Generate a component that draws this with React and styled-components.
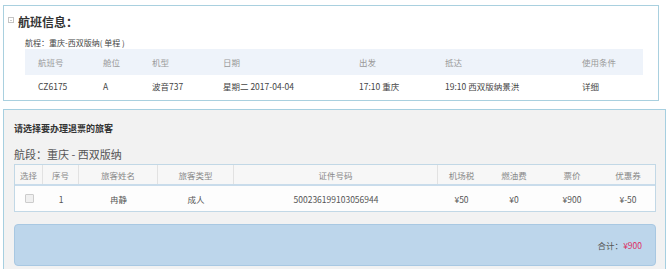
import styled, { createGlobalStyle } from "styled-components";

const Global = createGlobalStyle`
  body {
    margin: 0;
    background: #fff;
    font-family: "Noto Sans CJK SC", "Noto Sans", sans-serif;
    color: #333;
  }
`;

const Page = styled.div`
  width: 671px;
  height: 269px;
  overflow: hidden;
  padding: 5px 0 0 3px;
  box-sizing: border-box;
`;

const FlightPanel = styled.div`
  width: 656px;
  height: 96px;
  box-sizing: border-box;
  border: 1px solid #a9d0df;
  padding: 8px 15px 0 4px;
`;

const PanelTitle = styled.div`
  display: flex;
  align-items: center;
  gap: 4px;
  font-size: 12px;
  font-weight: bold;
  color: #333;
  line-height: 16px;
`;

const Toggle = styled.span`
  position: relative;
  width: 4px;
  height: 4px;
  border: 1px solid #c4c4c4;
  margin-top: -4px;

  &::after {
    content: "";
    position: absolute;
    left: 1px;
    right: 1px;
    top: 2px;
    height: 1px;
    background: #ccc;
  }
`;

const RouteLine = styled.div`
  font-size: 8px;
  color: #444;
  margin: 7px 0 0 17px;
  line-height: 12px;
`;

const FlightGrid = styled.div`
  margin: 0 0 0 17px;
  display: grid;
  grid-template-columns: 65px 49px 71px 136px 86px 137px 1fr;
  padding-left: 13px;
`;

const FlightHead = styled.div`
  background: #eef3fa;
  color: #999;
  font-size: 8.5px;
  height: 26px;
  line-height: 26px;
  margin-left: ${(p) => (p.$first ? "-13px" : "0")};
  padding-left: ${(p) => (p.$first ? "13px" : "0")};
`;

const FlightCell = styled.div`
  color: #444;
  font-size: 8.5px;
  height: 22px;
  line-height: 22px;
`;

const RefundPanel = styled.div`
  margin-top: 8px;
  width: 663px;
  height: 170px;
  box-sizing: border-box;
  border: 1px solid #a6cfe0;
  border-bottom: none;
  background: #f2f2f2;
  padding: 12px 9px 0 10px;
`;

const Prompt = styled.div`
  font-size: 9px;
  font-weight: bold;
  color: #333;
  line-height: 14px;
`;

const Segment = styled.div`
  font-size: 11px;
  color: #555;
  margin-top: 9px;
  line-height: 18px;
`;

const cols = "28px 36px 79px 76px 204px 47px 58px 58px 1fr";

const PassengerTable = styled.div`
  margin-top: 1px;
  border: 1px solid #c2d8e6;
  background: #fbfbfb;
`;

const Row = styled.div`
  display: grid;
  grid-template-columns: ${cols};
  height: ${(p) => (p.$head ? "19px" : "25px")};
  border-bottom: ${(p) => (p.$head ? "2px solid #c9dceb" : "none")};
  background: ${(p) => (p.$head ? "#f7f7f7" : "#fdfdfd")};
`;

const Cell = styled.div`
  display: flex;
  align-items: center;
  justify-content: center;
  font-size: 8.5px;
  color: ${(p) => (p.$head ? "#888" : "#555")};
  border-right: ${(p) => (p.$sep ? "1px solid #e2e2e2" : "none")};
`;

const Check = styled.span`
  width: 7px;
  height: 7px;
  border: 1px solid #ccc;
  border-radius: 1px;
  background: #f0f0f0;
`;

const TotalBox = styled.div`
  margin-top: 12px;
  height: 42px;
  box-sizing: border-box;
  background: #bdd6eb;
  border: 1px solid #a8c8e2;
  border-radius: 4px;
  display: flex;
  align-items: center;
  justify-content: flex-end;
  padding-right: 13px;
  font-size: 8.5px;
  color: #555;
`;

const Price = styled.span`
  color: #dc2f62;
`;

const flightHeads = ["航班号", "舱位", "机型", "日期", "出发", "抵达", "使用条件"];
const flightRow = ["CZ6175", "A", "波音737", "星期二 2017-04-04", "17:10 重庆", "19:10 西双版纳景洪", "详细"];

const heads = ["选择", "序号", "旅客姓名", "旅客类型", "证件号码", "机场税", "燃油费", "票价", "优惠券"];
const passenger = ["1", "冉静", "成人", "500236199103056944", "¥50", "¥0", "¥900", "¥-50"];

export default function App() {
  return (
    <>
      <Global />
      <Page>
        <FlightPanel>
          <PanelTitle>
            <Toggle />
            航班信息：
          </PanelTitle>
          <RouteLine>航程：重庆-西双版纳( 单程 )</RouteLine>
          <FlightGrid>
            {flightHeads.map((h, i) => (
              <FlightHead key={h} $first={i === 0}>
                {h}
              </FlightHead>
            ))}
            {flightRow.map((c) => (
              <FlightCell key={c}>{c}</FlightCell>
            ))}
          </FlightGrid>
        </FlightPanel>

        <RefundPanel>
          <Prompt>请选择要办理退票的旅客</Prompt>
          <Segment>航段：重庆 - 西双版纳</Segment>
          <PassengerTable>
            <Row $head>
              {heads.map((h, i) => (
                <Cell key={h} $head $sep={i < 5}>
                  {h}
                </Cell>
              ))}
            </Row>
            <Row>
              <Cell>
                <Check />
              </Cell>
              {passenger.map((c) => (
                <Cell key={c}>{c}</Cell>
              ))}
            </Row>
          </PassengerTable>
          <TotalBox>
            合计：<Price>¥900</Price>
          </TotalBox>
        </RefundPanel>
      </Page>
    </>
  );
}
